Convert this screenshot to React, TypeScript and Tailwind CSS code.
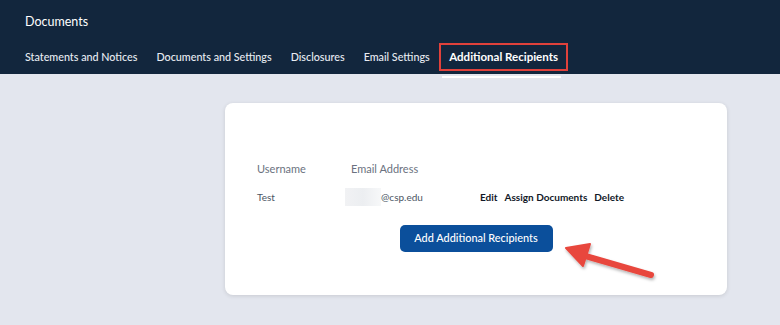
const tabs = ['Statements and Notices', 'Documents and Settings', 'Disclosures', 'Email Settings'];

function Arrow() {
  return (
    <svg
      className="absolute left-[555px] top-[238px] pointer-events-none"
      width="110"
      height="50"
      viewBox="555 238 110 50"
    >
      <defs>
        <filter id="sh" x="-20%" y="-40%" width="140%" height="180%">
          <feDropShadow dx="1" dy="2" stdDeviation="1.5" floodColor="#000" floodOpacity="0.3" />
        </filter>
      </defs>
      <g filter="url(#sh)" fill="#e8473e" stroke="#e8473e" strokeLinejoin="round" strokeLinecap="round">
        <line x1="651" y1="275" x2="582" y2="255" strokeWidth="6" />
        <polygon points="566,248 590,244 583,266" strokeWidth="2" />
      </g>
    </svg>
  );
}

export default function App() {
  return (
    <div className="relative min-h-[325px] bg-[#e3e6ee] font-['Lato',sans-serif]">
      <header className="h-[74px] bg-[#12263d] text-white">
        <div className="pl-[25px] pt-[13px] text-[12.5px] leading-[18px]">Documents</div>
        <nav className="mt-[12px] flex items-center pl-[15.5px]">
          {tabs.map((t) => (
            <span key={t} className="px-[9.5px] text-[10.75px] font-medium leading-[28px] text-[#e8ecf2]">
              {t}
            </span>
          ))}
          <span className="relative h-[28px] border-2 border-[#e0413b] px-[8px] text-[11.5px] font-bold leading-[24px]">
            Additional Recipients
            <span className="absolute left-[1px] right-[5px] top-[31px] h-[2px] bg-white" />
          </span>
        </nav>
      </header>

      <main className="pl-[225px] pt-[29px]">
        <section className="w-[502px] rounded-[8px] bg-white pb-[43px] pt-[57px] shadow-[0_1px_4px_rgba(0,0,0,0.12)]">
          <div className="grid grid-cols-[94px_129px_auto] pl-[32px]">
            <div className="text-[11px] leading-[18px] text-[#6b7280]">Username</div>
            <div className="text-[11px] leading-[18px] text-[#6b7280]">Email Address</div>
            <div />
            <div className="mt-[10px] text-[10px] leading-[18px] text-[#4b5563]">Test</div>
            <div className="mt-[10px] flex items-center text-[10px] leading-[18px] text-[#4b5563]">
              <span className="-ml-[6px] h-[18px] w-[36px] bg-gradient-to-r from-[#f1f2f4] via-[#eceef1] to-[#f7f8f9]" />
              <span>@csp.edu</span>
            </div>
            <div className="mt-[10px] flex gap-[7px] text-[10px] font-bold leading-[18px] text-[#111827]">
              <span>Edit</span>
              <span>Assign Documents</span>
              <span>Delete</span>
            </div>
          </div>
          <div className="mt-[19px] flex justify-center">
            <button className="h-[27px] w-[153px] rounded-[5px] bg-[#0b4f9b] text-[10.9px] font-medium text-white">
              Add Additional Recipients
            </button>
          </div>
        </section>
      </main>

      <Arrow />
    </div>
  );
}
